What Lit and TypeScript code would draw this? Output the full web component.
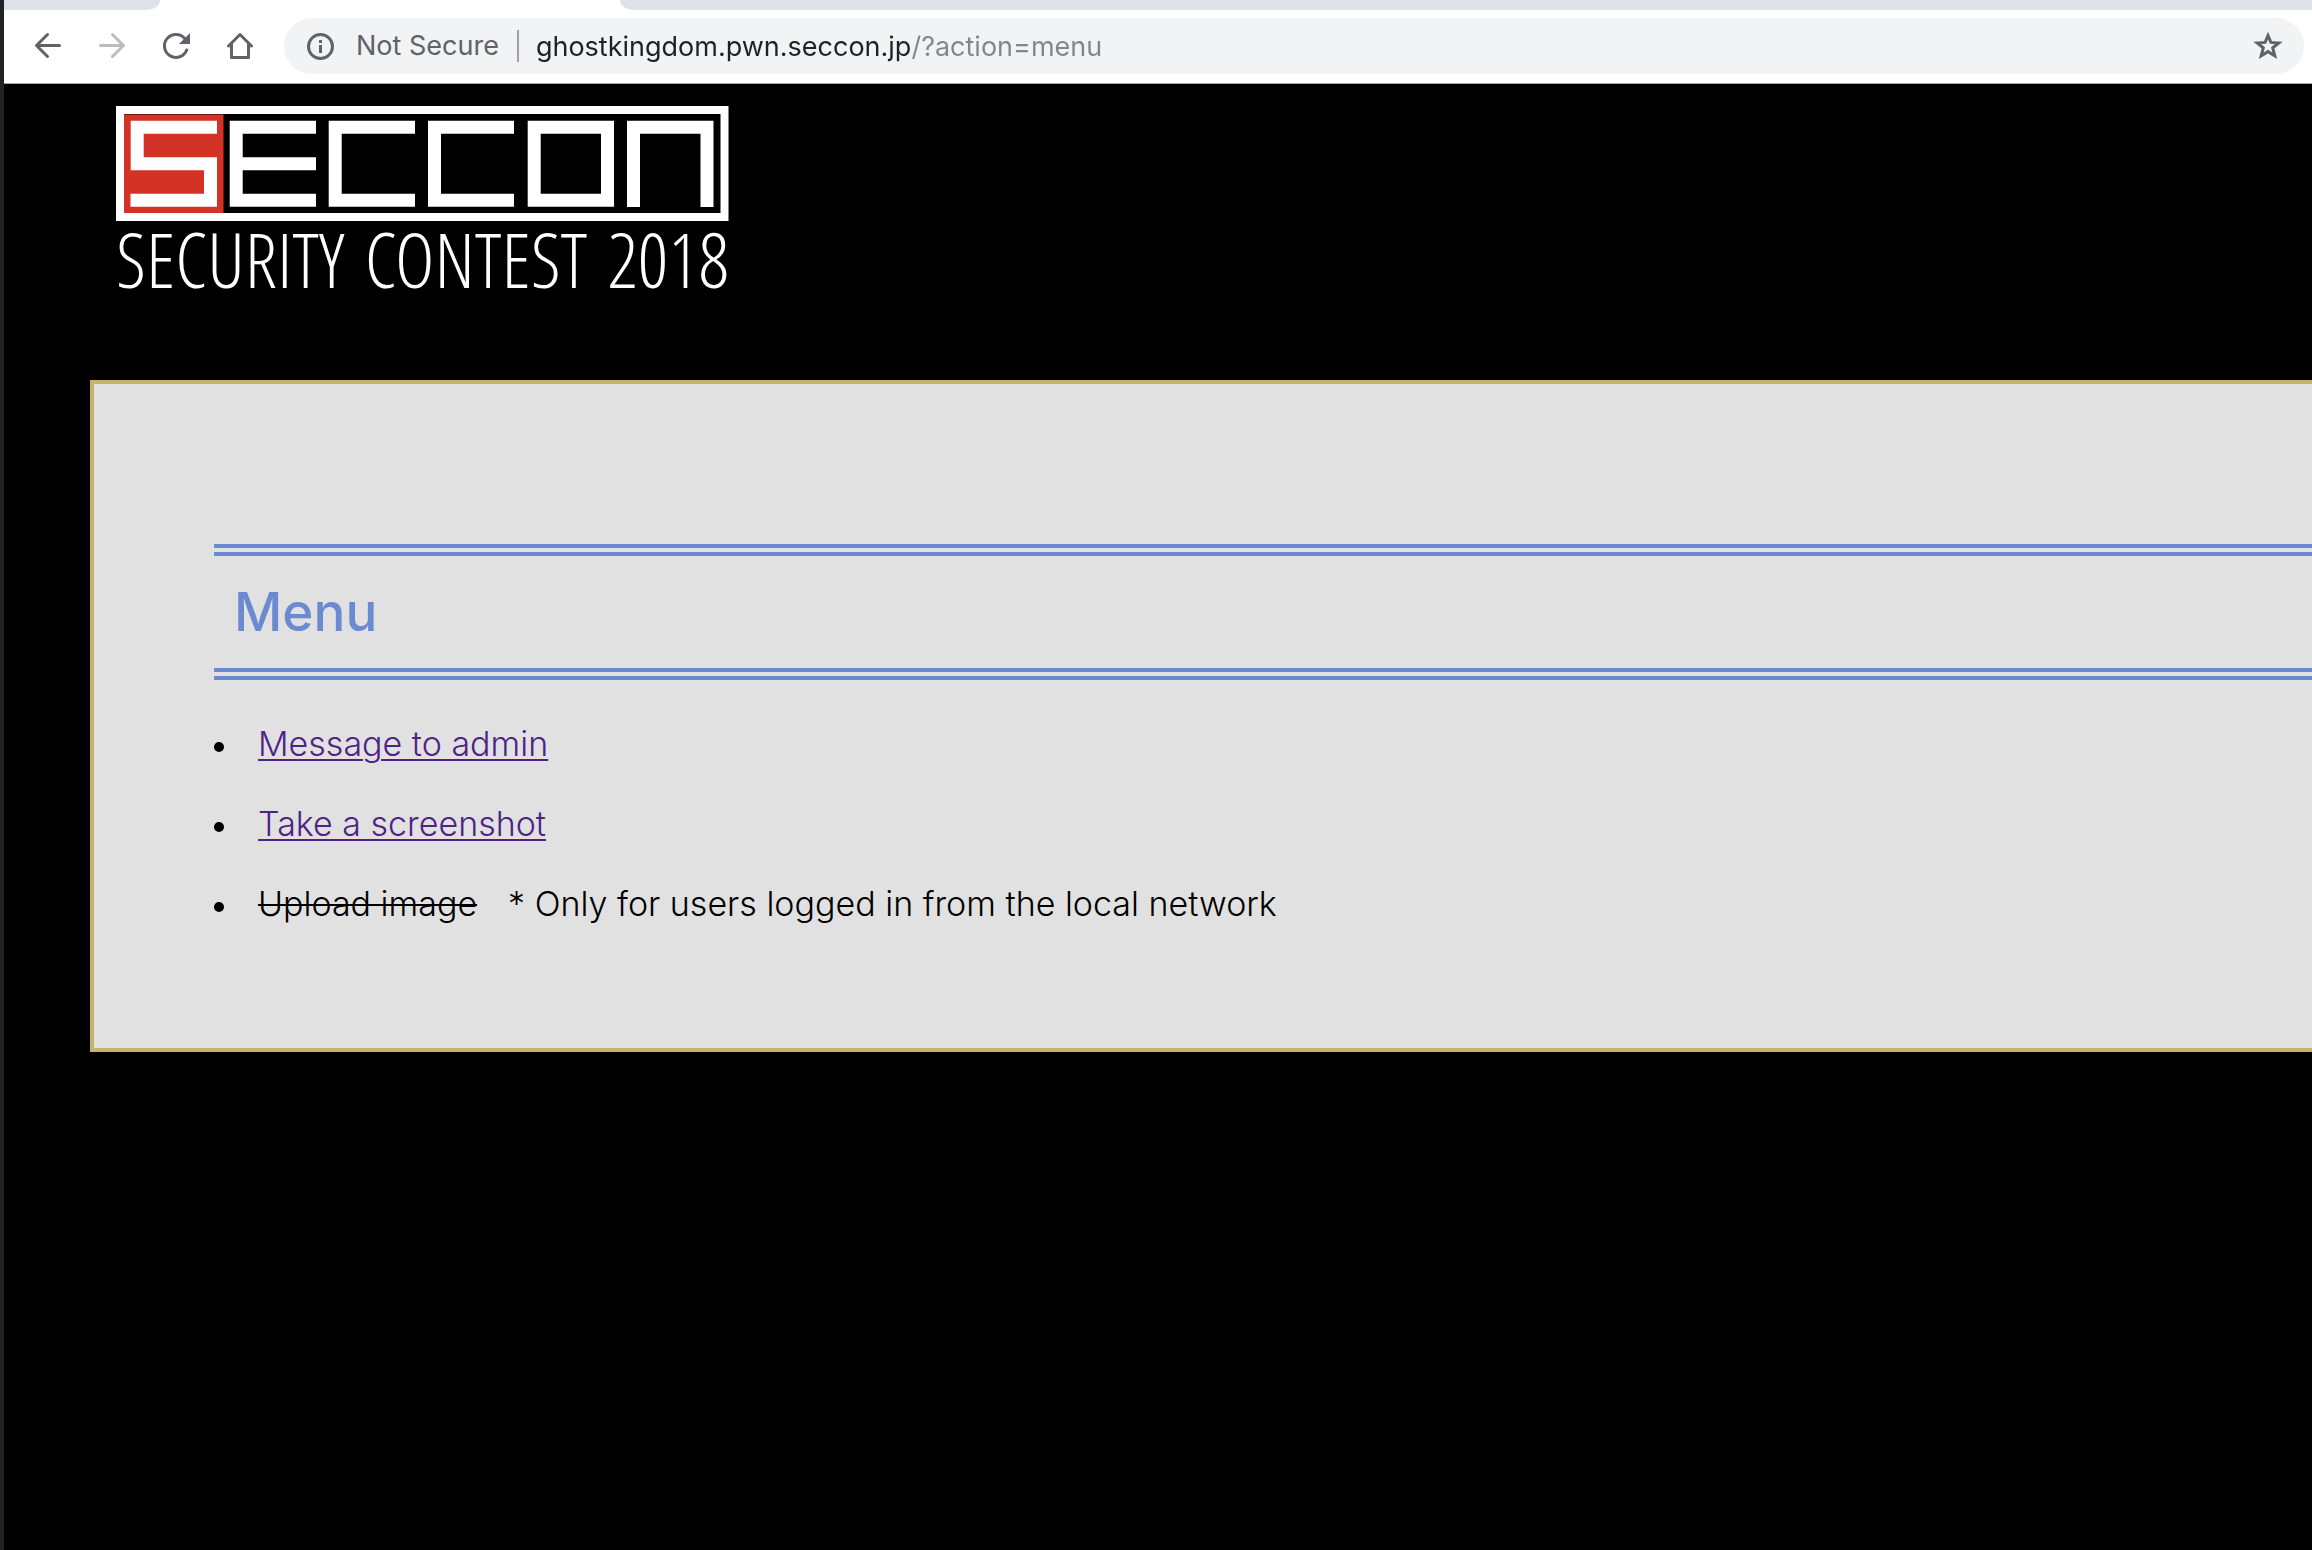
import { LitElement, html, css } from 'lit';
import { customElement } from 'lit/decorators.js';

@customElement('browser-toolbar')
class BrowserToolbar extends LitElement {
  static styles = css`
    :host {
      display: block;
      background: #fff;
      border-bottom: 1px solid #a8a8a8;
      font-family: Inter, 'Liberation Sans', sans-serif;
      font-weight: 400;
      font-size: 27px;
      line-height: 36px;
    }
    .strip {
      display: flex;
      justify-content: space-between;
      height: 10px;
      overflow: hidden;
    }
    .tab {
      background: #dee1e6;
      flex: none;
      width: 156px;
      border-bottom-right-radius: 16px 12px;
    }
    .rest {
      background: #dee1e6;
      flex: 1;
      margin-left: 460px;
      border-bottom-left-radius: 16px 12px;
    }
    .bar {
      display: flex;
      align-items: center;
      padding: 8px 8px 9px 12px;
    }
    button {
      display: flex;
      align-items: center;
      justify-content: center;
      flex: none;
      padding: 0;
      border: 0;
      background: none;
      color: #5f6368;
    }
    button:disabled {
      color: #babcbe;
    }
    .nav {
      width: 64px;
      height: 56px;
    }
    svg {
      display: block;
      fill: none;
      stroke: currentColor;
      stroke-width: 3;
    }
    .solid {
      fill: currentColor;
      stroke: none;
    }
    .omnibox {
      display: flex;
      align-items: center;
      flex: 1;
      min-width: 0;
      height: 56px;
      margin-left: 12px;
      padding: 0 20px;
      border-radius: 28px;
      background: #f1f3f4;
    }
    .security {
      gap: 20px;
      font: inherit;
      white-space: nowrap;
    }
    .divider {
      flex: none;
      width: 2px;
      height: 32px;
      margin: 0 17px 0 18px;
      background: #9aa0a6;
    }
    .url {
      flex: 1;
      min-width: 0;
      height: 40px;
      padding: 0;
      border: 0;
      outline: 0;
      font: inherit;
      color: transparent;
      caret-color: #202124;
      background: linear-gradient(90deg, #202124 376px, #80868b 376px);
      background-clip: text;
      -webkit-background-clip: text;
    }
  `;

  render() {
    return html`
      <div class="strip"><div class="tab"></div><div class="rest"></div></div>
      <div class="bar">
        <button class="nav" aria-label="Back">
          <svg width="32" height="32" viewBox="0 0 32 32" stroke-linecap="round" stroke-linejoin="round">
            <path d="M27.500 15.500H5M15.500 4.500L4.500 15.500L15.500 26.500" />
          </svg>
        </button>
        <button class="nav" aria-label="Forward" disabled>
          <svg width="32" height="32" viewBox="0 0 32 32" stroke-linecap="round" stroke-linejoin="round">
            <path d="M4.500 15.500H27M16.500 4.500L27.500 15.500L16.500 26.500" />
          </svg>
        </button>
        <button class="nav" aria-label="Reload">
          <svg width="32" height="32" viewBox="0 0 32 32" stroke-linecap="round">
            <path d="M26.700 20A11.500 11.500 0 1 1 24.500 8.200" />
            <path class="solid" d="M30 3V14H19Z" />
          </svg>
        </button>
        <button class="nav" aria-label="Home">
          <svg width="32" height="32" viewBox="0 0 32 32" stroke-linejoin="round" stroke-linecap="round">
            <path d="M4.500 16L16 4.500L27.500 16M7.500 14V27.500H24.500V14" />
          </svg>
        </button>
        <div class="omnibox">
          <button class="security">
            <svg width="32" height="32" viewBox="0 0 32 32">
              <circle cx="16.500" cy="16.500" r="12" />
              <path d="M16.500 15V23M16.500 10V13" />
            </svg>
            <span>Not Secure</span>
          </button>
          <span class="divider"></span>
          <input class="url" type="text" aria-label="Address" spellcheck="false"
            value="ghostkingdom.pwn.seccon.jp/?action=menu" />
          <button aria-label="Bookmark this page">
            <svg width="32" height="32" viewBox="0 0 32 32">
              <path d="M16 5.500L18.900 12.400L26.800 13L20.700 17.900L22.800 25.800L16 21.600L9.200 25.800L11.300 17.900L5.200 13L13.100 12.400Z" />
            </svg>
          </button>
        </div>
      </div>
    `;
  }
}

@customElement('contest-logo')
class ContestLogo extends LitElement {
  static styles = css`
    :host {
      display: block;
      width: fit-content;
      color: #fff;
      font-family: 'Open Sans Condensed Light', 'Roboto Condensed', sans-serif;
      font-weight: 300;
      font-size: 76px;
      line-height: 76px;
      white-space: nowrap;
    }
    svg {
      display: block;
    }
    .letters {
      fill: none;
      stroke: #fff;
      stroke-width: 13;
    }
    .tagline {
      display: flex;
      justify-content: space-between;
    }
  `;

  render() {
    return html`
      <svg width="613" height="115" viewBox="0 0 613 115" role="img" aria-label="SECCON">
        <rect x="4" y="4" width="604.500" height="107" fill="#000" stroke="#fff" stroke-width="8" />
        <rect x="8" y="8.500" width="99.500" height="98.500" fill="#d33226" />
        <g class="letters">
          <path d="M101 21.300H21.200V57.800H94.500V94.200H14.500" />
          <path d="M200 21.300H120.200V94.200H200M120 57.800H200" />
          <path d="M299 21.300H219.200V94.200H299" />
          <path d="M398 21.300H318.500V94.200H398" />
          <path d="M418.200 21.300H491.500V94.200H418.200Z" />
          <path d="M517.500 101V21.300H591V101" />
        </g>
      </svg>
      <div class="tagline"><span>SECURITY</span> <span>CONTEST</span> <span>2018</span></div>
    `;
  }
}

@customElement('app-root')
class AppRoot extends LitElement {
  static styles = css`
    :host {
      display: flex;
      min-height: 100vh;
      background: #000;
      color: #000;
      font-family: Inter, 'Liberation Sans', sans-serif;
      font-weight: 300;
      font-size: 34px;
    }
    .edge {
      flex: none;
      width: 4px;
      background: #202226;
    }
    .window {
      flex: 1;
      min-width: 0;
    }
    .page {
      padding: 22px 0 0 86px;
    }
    .logo {
      margin-left: 26px;
    }
    .panel {
      margin-top: 83px;
      padding: 160px 0 104px 120px;
      border: 4px solid #c4b36c;
      border-right: 0;
      background: #e1e1e1;
    }
    h1 {
      margin: 0;
      padding-left: 20px;
      border-top: 12px double #6b8ad2;
      border-bottom: 12px double #6b8ad2;
      color: #6b8ad2;
      font-size: 53px;
      font-weight: 500;
      line-height: 112px;
    }
    ul {
      margin: 24px 0 0;
      padding: 0;
      list-style: none;
    }
    li {
      display: flex;
      align-items: center;
      line-height: 80px;
    }
    li::before {
      content: '';
      flex: none;
      width: 10px;
      height: 10px;
      margin: 6px 34px 0 0;
      border-radius: 50%;
      background: #000;
    }
    a {
      color: #4f2288;
      text-decoration-thickness: 2px;
      text-underline-offset: 3px;
    }
    s {
      text-decoration-thickness: 2px;
      margin-right: 31px;
    }
  `;

  render() {
    return html`
      <div class="edge"></div>
      <div class="window">
        <browser-toolbar></browser-toolbar>
        <div class="page">
          <contest-logo class="logo"></contest-logo>
          <main class="panel">
            <h1>Menu</h1>
            <ul>
              <li><a href="?action=msgadm">Message to admin</a></li>
              <li><a href="?action=sshot">Take a screenshot</a></li>
              <li><s>Upload image</s><span>* Only for users logged in from the local network</span></li>
            </ul>
          </main>
        </div>
      </div>
    `;
  }
}
